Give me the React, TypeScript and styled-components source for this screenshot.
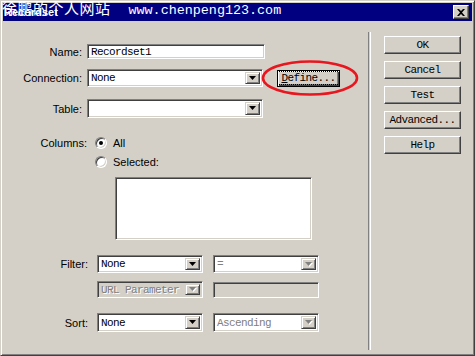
import React from 'react'
import styled, { createGlobalStyle } from 'styled-components'

const GlobalStyle = createGlobalStyle`
  html, body {
    margin: 0;
    padding: 0;
    background: #d4d0c8;
  }
  body {
    width: 475px;
    height: 356px;
    overflow: hidden;
  }
`

const MONO = `"Liberation Mono", "DejaVu Sans Mono", monospace`
const SANS = `"Liberation Sans", Arial, sans-serif`

const Window = styled.div`
  box-sizing: border-box;
  width: 475px;
  height: 356px;
  padding: 2px;
  background: #d4d0c8;
  border: 1px solid;
  border-color: #d4d0c8 #404040 #404040 #d4d0c8;
  box-shadow: inset 1px 1px #fff, inset -1px -1px #808080;
  display: flex;
  flex-direction: column;
`

const TitleBar = styled.div`
  position: relative;
  height: 18px;
  flex: none;
  padding: 0 3px 0 1px;
  background: #000080;
  display: flex;
  align-items: center;
  justify-content: space-between;
`

const Title = styled.span`
  font: bold 11px ${SANS};
  color: #fff;
`

const Watermark = styled.div`
  position: absolute;
  left: -1px;
  top: -3px;
  display: flex;
  align-items: baseline;
  color: #fff;
  white-space: nowrap;
  pointer-events: none;
`

const WatermarkCn = styled.span`
  font: 15px/15px "Noto Sans CJK SC", sans-serif;
  letter-spacing: 0.5px;
`

const WatermarkUrl = styled.span`
  margin-left: 18px;
  font: 13.4px/15px ${MONO};
`

const CloseBtn = styled.div`
  box-sizing: border-box;
  width: 16px;
  height: 14px;
  background: #d4d0c8;
  border: 1px solid;
  border-color: #fff #404040 #404040 #fff;
  box-shadow: inset -1px -1px #808080;
  display: flex;
  align-items: center;
  justify-content: center;
`

const Body = styled.div`
  flex: 1;
  display: flex;
`

const Form = styled.div`
  width: 365px;
  display: flex;
  flex-direction: column;
`

const Row = styled.div<{ $top: number }>`
  display: flex;
  align-items: center;
  margin-top: ${p => p.$top}px;
`

const Label = styled.label<{ $w: number }>`
  width: ${p => p.$w}px;
  flex: none;
  text-align: right;
  font: 11px ${SANS};
  color: #000;
`

const Sunken = styled.div<{ $w: number; $h: number; $gray?: boolean; $left?: number }>`
  box-sizing: border-box;
  width: ${p => p.$w}px;
  height: ${p => p.$h}px;
  margin-left: ${p => p.$left ?? 0}px;
  flex: none;
  background: ${p => (p.$gray ? '#d4d0c8' : '#fff')};
  border: 1px solid;
  border-color: #808080 #fff #fff #808080;
  box-shadow: inset 1px 1px #404040, inset -1px -1px #d4d0c8;
  padding: 2px;
  display: flex;
  align-items: center;
`

const Value = styled.span<{ $dim?: boolean }>`
  flex: 1;
  padding-left: 1px;
  font: 11px ${MONO};
  letter-spacing: -0.6px;
  color: ${p => (p.$dim ? '#808080' : '#000')};
  text-shadow: ${p => (p.$dim ? '1px 1px #fff' : 'none')};
  white-space: nowrap;
  overflow: hidden;
`

const ArrowBtn = styled.div`
  box-sizing: border-box;
  width: 15px;
  height: 100%;
  flex: none;
  background: #d4d0c8;
  border: 1px solid;
  border-color: #d4d0c8 #404040 #404040 #d4d0c8;
  box-shadow: inset 1px 1px #fff, inset -1px -1px #808080;
  display: flex;
  align-items: center;
  justify-content: center;
`

const Button = styled.div<{ $w: number; $h: number; $default?: boolean }>`
  position: relative;
  box-sizing: border-box;
  width: ${p => p.$w}px;
  height: ${p => p.$h}px;
  flex: none;
  background: #d4d0c8;
  border: 1px solid;
  border-color: ${p => (p.$default ? '#000' : '#fff #404040 #404040 #fff')};
  box-shadow: ${p =>
    p.$default
      ? 'inset 1px 1px #fff, inset -1px -1px #404040, inset -2px -2px #808080'
      : 'inset -1px -1px #808080'};
  display: flex;
  align-items: center;
  justify-content: center;
  font: 11px ${MONO};
  letter-spacing: -0.6px;
  color: #000;
`

const Focus = styled.span`
  padding: 0 3px;
  outline: 1px dotted #000;
  outline-offset: 0;
`

const DefineWrap = styled.div`
  position: relative;
  margin-left: 14px;
`

const Annotation = styled.svg`
  position: absolute;
  left: -16px;
  top: -11px;
  pointer-events: none;
`

const Radio = styled.span<{ $on?: boolean }>`
  box-sizing: border-box;
  width: 12px;
  height: 12px;
  flex: none;
  border-radius: 50%;
  background: #fff;
  border: 1px solid;
  border-color: #808080 #fff #fff #808080;
  box-shadow: inset 1px 1px #404040, inset -1px -1px #d4d0c8;
  display: flex;
  align-items: center;
  justify-content: center;

  &::after {
    content: '';
    width: 4px;
    height: 4px;
    border-radius: 50%;
    background: ${p => (p.$on ? '#000' : 'transparent')};
  }
`

const RadioText = styled.span`
  margin-left: 6px;
  font: 11px ${SANS};
  color: #000;
`

const Separator = styled.div`
  width: 1px;
  margin: 11px 0 3px;
  border-left: 1px solid #808080;
  border-right: 1px solid #fff;
`

const Side = styled.div`
  padding: 15px 0 0 13px;
  display: flex;
  flex-direction: column;
  gap: 7px;
`

const Arrow = ({ dim }: { dim?: boolean }) => (
  <svg width="8" height="5" viewBox="0 0 8 5">
    {dim && <path d="M1 1h7L4.5 5z" fill="#fff" />}
    <path d="M0 0h7L3.5 4z" fill={dim ? '#808080' : '#000'} />
  </svg>
)

type SelectProps = {
  w: number
  h: number
  value?: string
  gray?: boolean
  dim?: boolean
  arrowDim?: boolean
  left?: number
}

const Select = ({ w, h, value, gray, dim, arrowDim, left }: SelectProps) => (
  <Sunken $w={w} $h={h} $gray={gray} $left={left}>
    <Value $dim={dim}>{value}</Value>
    <ArrowBtn>
      <Arrow dim={arrowDim} />
    </ArrowBtn>
  </Sunken>
)

const App = () => (
  <>
    <GlobalStyle />
    <Window>
      <TitleBar>
        <Title>Recordset</Title>
        <Watermark>
          <WatermarkCn>徐鹏的个人网站</WatermarkCn>
          <WatermarkUrl>www.chenpeng123.com</WatermarkUrl>
        </Watermark>
        <CloseBtn>
          <svg width="8" height="7" viewBox="0 0 8 7">
            <path d="M0 0h2l2 2 2-2h2L5 3.5 8 7H6L4 5 2 7H0l3-3.5z" fill="#000" />
          </svg>
        </CloseBtn>
      </TitleBar>
      <Body>
        <Form>
          <Row $top={23}>
            <Label $w={79}>Name:</Label>
            <Sunken $w={178} $h={15} $left={5}>
              <Value>Recordset1</Value>
            </Sunken>
          </Row>
          <Row $top={10}>
            <Label $w={79}>Connection:</Label>
            <Select w={176} h={18} value="None" left={5} />
            <DefineWrap>
              <Button $w={63} $h={17} $default>
                <Focus>
                  <u>D</u>efine...
                </Focus>
              </Button>
              <Annotation width="100" height="40" viewBox="0 0 100 40">
                <ellipse cx="49" cy="19" rx="47" ry="16.5" fill="none" stroke="#e8161e" strokeWidth="2.6" />
              </Annotation>
            </DefineWrap>
          </Row>
          <Row $top={12}>
            <Label $w={79}>Table:</Label>
            <Select w={176} h={19} left={5} />
          </Row>
          <Row $top={19}>
            <Label $w={84}>Columns:</Label>
            <Radio $on style={{ marginLeft: 8 }} />
            <RadioText>All</RadioText>
          </Row>
          <Row $top={7}>
            <Label $w={84} />
            <Radio style={{ marginLeft: 8 }} />
            <RadioText>Selected:</RadioText>
          </Row>
          <Row $top={9}>
            <Sunken $w={197} $h={63} $left={112} />
          </Row>
          <Row $top={15}>
            <Label $w={85}>Filter:</Label>
            <Select w={106} h={18} value="None" left={9} />
            <Select w={106} h={18} value="=" dim arrowDim left={10} />
          </Row>
          <Row $top={8}>
            <Label $w={85} />
            <Select w={106} h={17} value="URL Parameter" gray dim arrowDim left={9} />
            <Sunken $w={106} $h={16} $gray $left={10} />
          </Row>
          <Row $top={15}>
            <Label $w={85}>Sort:</Label>
            <Select w={106} h={19} value="None" left={9} />
            <Select w={106} h={19} value="Ascending" dim arrowDim left={10} />
          </Row>
        </Form>
        <Separator />
        <Side>
          <Button $w={77} $h={18}>OK</Button>
          <Button $w={77} $h={18}>Cancel</Button>
          <Button $w={77} $h={18}>Test</Button>
          <Button $w={77} $h={18}>Advanced...</Button>
          <Button $w={77} $h={18}>Help</Button>
        </Side>
      </Body>
    </Window>
  </>
)

export default App
